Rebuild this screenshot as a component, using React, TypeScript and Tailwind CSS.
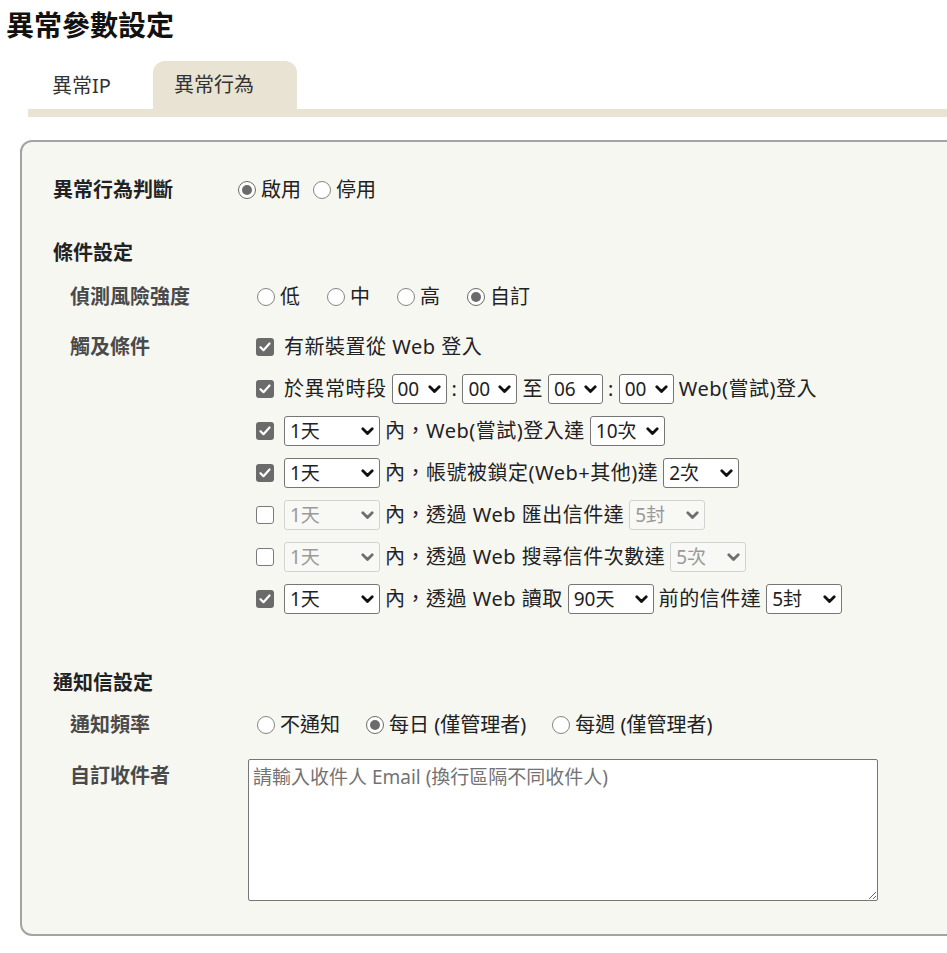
import type { ReactNode } from 'react';

const FONT = "font-['Noto_Sans','Noto_Sans_CJK_TC',sans-serif]";

function Radio({ checked = false, children }: { checked?: boolean; children: ReactNode }) {
  return (
    <label className="flex items-center gap-[5px] text-[20px] text-[#222]">
      <span
        className={`flex h-[18px] w-[18px] items-center justify-center rounded-full border-[1.5px] bg-white ${
          checked ? 'border-[#6b6b6b]' : 'border-[#858585]'
        }`}
      >
        {checked && <span className="h-[10px] w-[10px] rounded-full bg-[#6b6b6b]" />}
      </span>
      <span>{children}</span>
    </label>
  );
}

function Checkbox({ checked = false }: { checked?: boolean }) {
  if (!checked) {
    return <span className="mr-[5px] h-[18px] w-[18px] shrink-0 rounded-[3px] border-[1.5px] border-[#7a7a7a] bg-white" />;
  }
  return (
    <span className="mr-[5px] flex h-[18px] w-[18px] shrink-0 items-center justify-center rounded-[3px] bg-[#6b6b6b]">
      <svg width="12" height="10" viewBox="0 0 12 10" fill="none">
        <path d="M1.5 5.2 4.5 8.2 10.5 1.5" stroke="#fff" strokeWidth="2.2" strokeLinecap="round" strokeLinejoin="round" />
      </svg>
    </span>
  );
}

function Select({ value, className, disabled = false }: { value: string; className: string; disabled?: boolean }) {
  return (
    <span
      className={`relative flex h-[30px] shrink-0 items-center rounded-[3px] border pl-[5px] text-[19px] tracking-normal ${
        disabled ? 'border-[#d2d2d0] bg-[#f8f8f5] text-[#9a9a9a]' : 'border-[#767676] bg-white text-[#222]'
      } ${className}`}
    >
      {value}
      <svg className="absolute right-[5px] top-[10px]" width="13" height="9" viewBox="0 0 13 9" fill="none">
        <path
          d="M1.8 1.8 6.5 6.6 11.2 1.8"
          stroke={disabled ? '#6f6f6f' : '#111'}
          strokeWidth="2.8"
          strokeLinecap="round"
          strokeLinejoin="round"
        />
      </svg>
    </span>
  );
}

function Row({ children }: { children: ReactNode }) {
  return (
    <div className="flex h-[30px] items-center gap-[5px] text-[20px] tracking-[0.5px] text-[#222]">{children}</div>
  );
}

export default function App() {
  return (
    <div className={`min-h-[953px] w-full overflow-hidden bg-white ${FONT}`}>
      {/* Page title */}
      <div className="flex h-[50px] items-center pl-[6px]">
        <h1 className="text-[28px] font-bold leading-none text-[#111]">異常參數設定</h1>
      </div>

      {/* Tabs */}
      <div className="ml-[28px] mt-[12px]">
        <div className="flex h-[47px] items-end">
          <div className="flex h-[47px] items-center pl-[24px] pr-[42px] text-[20px] text-[#333]">異常IP</div>
          <div className="flex h-[48px] items-center rounded-t-[12px] bg-[#e9e3d3] pl-[21px] pr-[43px] text-[20px] text-[#333]">
            異常行為
          </div>
        </div>
        <div className="h-[8px] w-[1000px] bg-[#e9e3d3]" />
      </div>

      {/* Settings panel */}
      <div className="ml-[20px] mt-[23px] w-[960px] rounded-[12px] border-2 border-[#a3a3a3] bg-[#f7f7f2] pb-[33px] pl-[31px] pt-[33px]">
        <div className="flex h-[30px] items-center">
          <div className="w-[185px] text-[20px] font-bold text-[#222]">異常行為判斷</div>
          <div className="flex items-center gap-[12px]">
            <Radio checked>啟用</Radio>
            <Radio>停用</Radio>
          </div>
        </div>

        <div className="mt-[33px] flex h-[30px] items-center text-[20px] font-bold text-[#222]">條件設定</div>

        <div className="mt-[14px] flex h-[30px] items-center pl-[17px]">
          <div className="w-[187px] text-[20px] font-bold text-[#4a4a4a]">偵測風險強度</div>
          <div className="flex items-center gap-[27px]">
            <Radio>低</Radio>
            <Radio>中</Radio>
            <Radio>高</Radio>
            <Radio checked>自訂</Radio>
          </div>
        </div>

        <div className="mt-[20px] flex pl-[17px]">
          <div className="flex h-[30px] w-[186px] items-center text-[20px] font-bold text-[#4a4a4a]">觸及條件</div>
          <div className="flex flex-col gap-[12px]">
            <Row>
              <Checkbox checked />
              <span>有新裝置從 Web 登入</span>
            </Row>
            <Row>
              <Checkbox checked />
              <span>於異常時段</span>
              <Select value="00" className="w-[55px]" />
              <span>:</span>
              <Select value="00" className="w-[55px]" />
              <span>至</span>
              <Select value="06" className="w-[55px]" />
              <span>:</span>
              <Select value="00" className="w-[55px]" />
              <span>Web(嘗試)登入</span>
            </Row>
            <Row>
              <Checkbox checked />
              <Select value="1天" className="w-[96px]" />
              <span>內，Web(嘗試)登入達</span>
              <Select value="10次" className="w-[75px]" />
            </Row>
            <Row>
              <Checkbox checked />
              <Select value="1天" className="w-[96px]" />
              <span>內，帳號被鎖定(Web+其他)達</span>
              <Select value="2次" className="w-[76px]" />
            </Row>
            <Row>
              <Checkbox />
              <Select value="1天" className="w-[96px]" disabled />
              <span>內，透過 Web 匯出信件達</span>
              <Select value="5封" className="w-[76px]" disabled />
            </Row>
            <Row>
              <Checkbox />
              <Select value="1天" className="w-[96px]" disabled />
              <span>內，透過 Web 搜尋信件次數達</span>
              <Select value="5次" className="w-[76px]" disabled />
            </Row>
            <Row>
              <Checkbox checked />
              <Select value="1天" className="w-[96px]" />
              <span>內，透過 Web 讀取</span>
              <Select value="90天" className="w-[86px]" />
              <span>前的信件達</span>
              <Select value="5封" className="w-[76px]" />
            </Row>
          </div>
        </div>

        <div className="mt-[54px] flex h-[30px] items-center text-[20px] font-bold text-[#222]">通知信設定</div>

        <div className="mt-[12px] flex h-[30px] items-center pl-[17px]">
          <div className="w-[187px] text-[20px] font-bold text-[#4a4a4a]">通知頻率</div>
          <div className="flex items-center gap-[26px]">
            <Radio>不通知</Radio>
            <Radio checked>每日 (僅管理者)</Radio>
            <Radio>每週 (僅管理者)</Radio>
          </div>
        </div>

        <div className="mt-[19px] flex pl-[17px]">
          <div className="w-[178px] pt-[2px] text-[20px] font-bold text-[#4a4a4a]">自訂收件者</div>
          <textarea
            className="h-[142px] w-[630px] resize rounded-[2px] border border-[#767676] bg-white px-[4px] py-[3px] text-[19px] text-[#222] placeholder:text-[#737373] focus:outline-none"
            placeholder="請輸入收件人 Email (換行區隔不同收件人)"
          />
        </div>
      </div>
    </div>
  );
}
